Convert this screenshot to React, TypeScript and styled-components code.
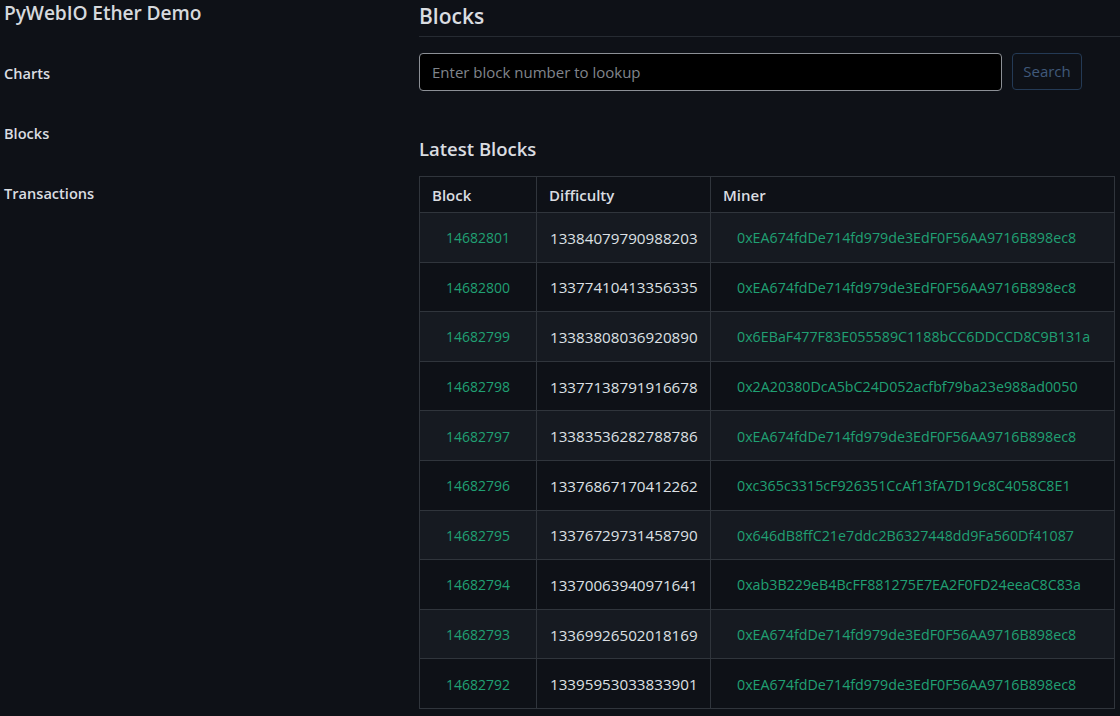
import React from "react";
import styled, { createGlobalStyle } from "styled-components";

const Global = createGlobalStyle`
  html, body { margin: 0; padding: 0; background: #0e1117; }
  body { font-family: "Open Sans", "Noto Sans", sans-serif; color: #d6d9dd; }
  * { box-sizing: border-box; }
`;

const Page = styled.div`
  display: flex;
  width: 1120px;
  height: 716px;
  overflow: hidden;
  background: #0e1117;
`;

const Sidebar = styled.nav`
  width: 419px;
  flex-shrink: 0;
  padding: 0 0 0 4px;
  display: flex;
  flex-direction: column;
`;

const Brand = styled.div`
  font-size: 19.2px;
  font-weight: 600;
  color: #d6d9dd;
  height: 26px;
  line-height: 26px;
  letter-spacing: -0.1px;
`;

const NavList = styled.div`
  display: flex;
  flex-direction: column;
  gap: 38px;
  margin-top: 36px;
`;

const NavItem = styled.a`
  font-size: 14.6px;
  font-weight: 600;
  color: #dadde1;
  line-height: 22px;
  text-decoration: none;
`;

const Main = styled.main`
  flex: 1;
  display: flex;
  flex-direction: column;
  min-width: 0;
`;

const Title = styled.h2`
  margin: 0;
  font-size: 21px;
  font-weight: 600;
  color: #dadde1;
  line-height: 30px;
  padding-top: 1px;
  padding-bottom: 5px;
  border-bottom: 1px solid #262b32;
`;

const SearchRow = styled.div`
  display: flex;
  align-items: flex-start;
  gap: 10px;
  margin-top: 16px;
`;

const Input = styled.input`
  width: 583px;
  height: 38px;
  background: #000;
  border: 1px solid #8c9096;
  border-radius: 4px;
  padding: 0 12px;
  font-family: inherit;
  font-size: 15px;
  color: #d6d9dd;
  outline: none;
  &::placeholder { color: #80858c; }
`;

const Button = styled.button`
  height: 37px;
  width: 70px;
  background: transparent;
  border: 1px solid #243a55;
  border-radius: 4px;
  color: #40597a;
  font-family: inherit;
  font-size: 15px;
  padding: 0 0 2px;
`;

const Subtitle = styled.h3`
  margin: 45px 0 0;
  font-size: 18.5px;
  font-weight: 600;
  color: #dadde1;
  line-height: 26px;
`;

const Table = styled.table`
  margin-top: 14px;
  border-collapse: collapse;
  width: 695px;
  table-layout: fixed;
  font-size: 15px;
`;

const Th = styled.th<{ $w: number }>`
  width: ${(p) => p.$w}px;
  text-align: left;
  font-weight: 600;
  color: #dadde1;
  height: 36px;
  padding: 0 12px;
  border: 1px solid #30353c;
`;

const Row = styled.tr<{ $odd: boolean }>`
  background: ${(p) => (p.$odd ? "#161a21" : "#0e1117")};
  height: 49.6px;
`;

const Td = styled.td<{ $link?: boolean; $size?: number }>`
  padding: 1px 12px 0 ${(p) => (p.$link ? 26 : 13)}px;
  border: 1px solid #30353c;
  font-size: ${(p) => p.$size ?? 15}px;
  color: ${(p) => (p.$link ? "#20a073" : "#dde0e4")};
  white-space: nowrap;
  overflow: hidden;
`;

const rows: [string, string, string][] = [
  ["14682801", "13384079790988203", "0xEA674fdDe714fd979de3EdF0F56AA9716B898ec8"],
  ["14682800", "13377410413356335", "0xEA674fdDe714fd979de3EdF0F56AA9716B898ec8"],
  ["14682799", "13383808036920890", "0x6EBaF477F83E055589C1188bCC6DDCCD8C9B131a"],
  ["14682798", "13377138791916678", "0x2A20380DcA5bC24D052acfbf79ba23e988ad0050"],
  ["14682797", "13383536282788786", "0xEA674fdDe714fd979de3EdF0F56AA9716B898ec8"],
  ["14682796", "13376867170412262", "0xc365c3315cF926351CcAf13fA7D19c8C4058C8E1"],
  ["14682795", "13376729731458790", "0x646dB8ffC21e7ddc2B6327448dd9Fa560Df41087"],
  ["14682794", "13370063940971641", "0xab3B229eB4BcFF881275E7EA2F0FD24eeaC8C83a"],
  ["14682793", "13369926502018169", "0xEA674fdDe714fd979de3EdF0F56AA9716B898ec8"],
  ["14682792", "13395953033833901", "0xEA674fdDe714fd979de3EdF0F56AA9716B898ec8"],
];

export default function App() {
  return (
    <>
      <Global />
      <Page>
        <Sidebar>
          <Brand>PyWebIO Ether Demo</Brand>
          <NavList>
            <NavItem>Charts</NavItem>
            <NavItem>Blocks</NavItem>
            <NavItem>Transactions</NavItem>
          </NavList>
        </Sidebar>
        <Main>
          <Title>Blocks</Title>
          <SearchRow>
            <Input placeholder="Enter block number to lookup" />
            <Button>Search</Button>
          </SearchRow>
          <Subtitle>Latest Blocks</Subtitle>
          <Table>
            <thead>
              <tr>
                <Th $w={117}>Block</Th>
                <Th $w={174}>Difficulty</Th>
                <Th $w={404}>Miner</Th>
              </tr>
            </thead>
            <tbody>
              {rows.map((r, i) => (
                <Row key={r[0]} $odd={i % 2 === 0}>
                  <Td $link $size={14}>{r[0]}</Td>
                  <Td $size={15.2}>{r[1]}</Td>
                  <Td $link $size={14.25}>{r[2]}</Td>
                </Row>
              ))}
            </tbody>
          </Table>
        </Main>
      </Page>
    </>
  );
}
